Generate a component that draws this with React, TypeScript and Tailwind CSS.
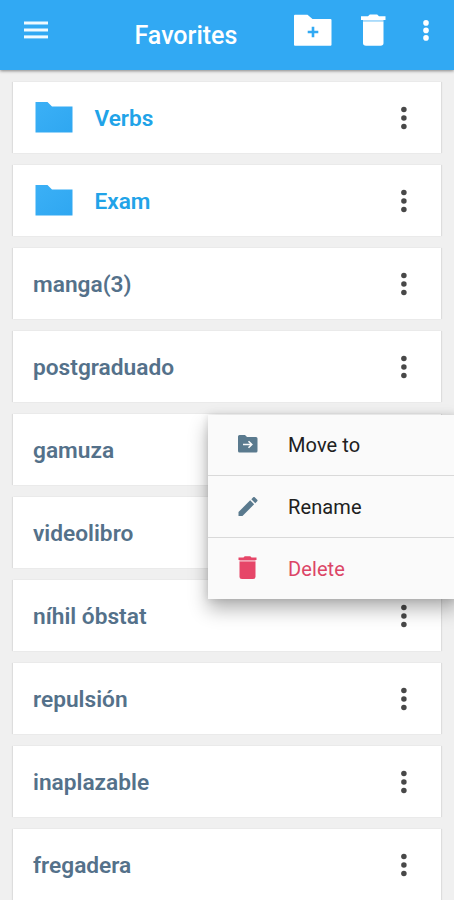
function Dots({ color }: { color: string }) {
  return (
    <svg width="8" height="24" viewBox="0 0 8 24" fill={color} className="mt-px shrink-0">
      <circle cx="3.900" cy="3.500" r="2.750" />
      <circle cx="3.900" cy="12" r="2.750" />
      <circle cx="3.900" cy="20.500" r="2.750" />
    </svg>
  );
}

const items = [
  { name: "Verbs", folder: true },
  { name: "Exam", folder: true },
  { name: "manga(3)" },
  { name: "postgraduado" },
  { name: "gamuza" },
  { name: "videolibro" },
  { name: "níhil óbstat" },
  { name: "repulsión" },
  { name: "inaplazable" },
  { name: "fregadera" },
];

function Header() {
  return (
    <header className="relative z-10 flex h-[69.500px] shrink-0 items-start bg-[#31a9f3] text-white shadow-[0_1px_3px_rgba(0,0,0,0.45)]">
      <svg className="mt-5 ml-6 shrink-0" width="24" height="20" viewBox="0 0 24 20" fill="#eefaff">
        <rect y="1.500" width="24" height="3" />
        <rect y="8.500" width="24" height="3" />
        <rect y="15.400" width="24" height="3" />
      </svg>
      <h1 className="mt-[21px] ml-[86.500px] w-[110px] text-[25px] leading-[30px] font-medium whitespace-nowrap">Favorites</h1>
      <svg className="mt-3.5 ml-[49.500px] shrink-0" width="38" height="32" viewBox="0 0 38 32">
        <path d="M1 .8H13.500L18.500 5H36.500Q37.500 5 37.500 6V30.700Q37.500 31.700 36.500 31.700H1Q0 31.700 0 30.700V1.800Q0 .8 1 .8Z" fill="#fff" />
        <path d="M17.700 12.700h2.600v4h4v2.600h-4v4h-2.600v-4h-4v-2.600h4z" fill="#31a9f3" />
      </svg>
      <svg className="mt-3.5 ml-[29px] shrink-0" width="25" height="33" viewBox="0 0 25 33">
        <path d="M0 2.300H7L8.800.5h7.400L18 2.300h6.500V6H0z" fill="#fff" />
        <path d="M2 6H22.500V7.500H2z" fill="#a9dafb" />
        <path d="M2 7.500h20.500V29q0 2.700-3 2.700H5q-3 0-3-2.700z" fill="#fff" />
      </svg>
      <svg className="mt-[19px] ml-[36px] shrink-0" width="8" height="23" viewBox="0 0 8 23" fill="#fff">
        <circle cx="4" cy="3.900" r="2.800" />
        <circle cx="4" cy="11.400" r="2.800" />
        <circle cx="4" cy="18.900" r="2.800" />
      </svg>
    </header>
  );
}

function ContextMenu() {
  return (
    <div className="absolute top-[414.500px] left-[207.500px] z-20 w-[250px] bg-[#fafafa] text-[20px] text-[#202020] shadow-[0_10px_18px_rgba(0,0,0,0.3),0_0_8px_rgba(0,0,0,0.12)]">
      <div className="flex h-[61.500px] items-center border-b border-[#d9d9d9] pl-[30px]">
        <svg width="20" height="18" viewBox="0 0 20 18" className="-mt-0.5">
          <path d="M1.500 0H7l2 2h9q1.500 0 1.500 1.500v12.500q0 1.500-1.500 1.500H1.500Q0 17.500 0 16V1.500Q0 0 1.500 0Z" fill="#5a7a8e" />
          <path d="M5 9.500h8.500M10.500 6.200 13.800 9.500l-3.300 3.300" fill="none" stroke="#fafafa" strokeWidth="1.600" />
        </svg>
        <span className="mt-px ml-[30.500px] tracking-[0.1px]">Move to</span>
      </div>
      <div className="flex h-[61.500px] items-center border-b border-[#d9d9d9] pl-[30px]">
        <svg width="20" height="19" viewBox="3 3 18 18" fill="#5a7a8e">
          <path d="M3 17.250V21h3.750L17.810 9.940l-3.750-3.750L3 17.250zM20.710 7.040a1 1 0 0 0 0-1.410l-2.340-2.340a1 1 0 0 0-1.410 0l-1.830 1.830 3.750 3.750 1.830-1.830z" />
        </svg>
        <span className="mt-0.5 ml-[30.500px] tracking-[0.1px]">Rename</span>
      </div>
      <div className="flex h-[61px] items-center pl-[30px] text-[#dc4566]">
        <svg width="20" height="24" viewBox="0 0 20 24">
          <path d="M.5 1.500h5L6.700.3h5.600L13.500 1.500h5V4H.5z" fill="#e64668" />
          <path d="M1.500 4H17.500V5.500H1.500z" fill="#f3a3b4" />
          <path d="M1.500 5.500h16v15q0 2.500-2.500 2.500H4Q1.500 23 1.500 20.500z" fill="#e64668" />
        </svg>
        <span className="mt-px ml-[30.500px] tracking-[0.1px]">Delete</span>
      </div>
    </div>
  );
}

export default function App() {
  return (
    <div className="relative flex h-[900px] w-[454px] flex-col overflow-hidden bg-[#f0f0f0] font-['Roboto','Liberation_Sans',sans-serif]">
      <Header />
      <main className="flex flex-col gap-[12.100px] px-[13px] pt-[12px]">
        {items.map((item) => (
          <div
            key={item.name}
            className="flex h-[71px] w-[428px] shrink-0 items-center bg-white pr-[33.500px] pl-[20px] shadow-[1px_0_1px_rgba(0,0,0,0.08),-1px_0_1px_rgba(0,0,0,0.08)]"
          >
            {item.folder && (
              <svg className="mr-[21.500px] ml-[2px] shrink-0" width="38" height="31" viewBox="0 0 38 31">
                <defs>
                  <linearGradient id="folder" x1="0" y1="0" x2="1" y2="1">
                    <stop offset="0" stopColor="#3bb0f6" />
                    <stop offset="1" stopColor="#2fa7f1" />
                  </linearGradient>
                </defs>
                <path d="M.5 0H12.500L17 4.500H37.500V30.500H.5V0Z" fill="url(#folder)" />
              </svg>
            )}
            <span
              className={
                item.folder
                  ? "mt-[3px] flex-1 text-[22.600px] font-semibold text-[#21a3e8]"
                  : "mt-[3px] flex-1 text-[22.700px] font-semibold text-[#54718a]"
              }
            >
              {item.name}
            </span>
            <Dots color="#484848" />
          </div>
        ))}
      </main>
      <ContextMenu />
    </div>
  );
}
